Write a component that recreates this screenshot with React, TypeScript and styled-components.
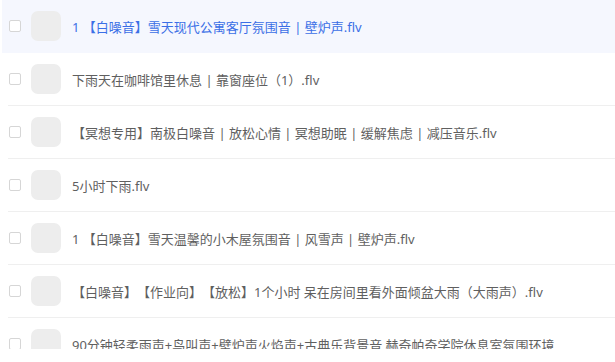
import React from "react";
import styled, { createGlobalStyle } from "styled-components";

const Global = createGlobalStyle`
  html, body { margin: 0; padding: 0; background: #ffffff; }
  body { font-family: "Noto Sans", "Noto Sans CJK SC", sans-serif; overflow: hidden; }
`;

const Scroller = styled.div`
  height: 349px;
  overflow: hidden;
`;

const List = styled.ul`
  list-style: none;
  margin: 0;
  padding: 0 0 0 2px;
  width: 613px;
`;

const Row = styled.li<{ $active?: boolean }>`
  height: 53px;
  padding-left: 6px;
  background: ${(p) => (p.$active ? "#f5f7fe" : "transparent")};
`;

const Inner = styled.div<{ $active?: boolean }>`
  height: 52px;
  display: flex;
  align-items: center;
  padding-left: 1px;
  border-bottom: 1px solid ${(p) => (p.$active ? "transparent" : "#efefef")};
`;

const Check = styled.span`
  width: 10px;
  height: 10px;
  border: 1px solid #d6d6d6;
  border-radius: 2px;
  background: #fff;
  flex: none;
`;

const Thumb = styled.div`
  width: 30px;
  height: 30px;
  border-radius: 7px;
  background: #ededed;
  margin-left: 10px;
  flex: none;
`;

const Name = styled.span<{ $active?: boolean }>`
  margin-left: 11px;
  font-family: "Noto Sans", "Noto Sans CJK SC", sans-serif;
  font-size: 13px;
  line-height: 18px;
  color: ${(p) => (p.$active ? "#3b6fe6" : "#5f5f5f")};
  white-space: nowrap;
  text-spacing-trim: space-all;
  margin-top: 1px;
`;

const items = [
  "1 【白噪音】雪天现代公寓客厅氛围音 | 壁炉声.flv",
  "下雨天在咖啡馆里休息 | 靠窗座位（1）.flv",
  "【冥想专用】南极白噪音 | 放松心情 | 冥想助眠 | 缓解焦虑 | 减压音乐.flv",
  "5小时下雨.flv",
  "1 【白噪音】雪天温馨的小木屋氛围音 | 风雪声 | 壁炉声.flv",
  "【白噪音】【作业向】【放松】1个小时 呆在房间里看外面倾盆大雨（大雨声）.flv",
  "90分钟轻柔雨声+鸟叫声+壁炉声火焰声+古典乐背景音 赫奇帕奇学院休息室氛围环境",
];

export default function App() {
  return (
    <>
      <Global />
      <Scroller>
        <List>
          {items.map((t, i) => (
            <Row key={i} $active={i === 0}>
              <Inner $active={i === 0}>
                <Check />
                <Thumb />
                <Name $active={i === 0}>{t}</Name>
              </Inner>
            </Row>
          ))}
        </List>
      </Scroller>
    </>
  );
}
